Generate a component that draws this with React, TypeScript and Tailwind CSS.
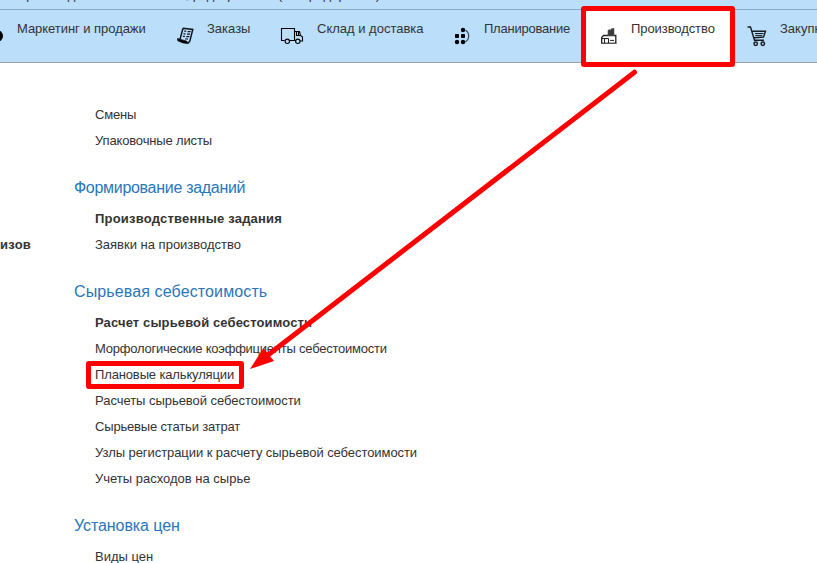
import type { ReactNode } from "react";

const Item = ({ children, bold, track = "" }: { children: string; bold?: boolean; track?: string }) => (
  <li className={`h-[26px] leading-[26px] ${bold ? "font-bold" : ""} ${track}`}>{children}</li>
);

const Group = ({ title, track, children }: { title: string; track: string; children: ReactNode }) => (
  <section>
    <h2 className={`-ml-[21px] mt-[21px] h-[31px] text-[16px] leading-[26px] text-[#2a76ba] ${track}`}>{title}</h2>
    <ul>{children}</ul>
  </section>
);

const OrdersIcon = () => (
  <svg className="ml-[7px] mt-[17px] h-[18px] w-[18px] shrink-0" viewBox="0 0 18 18" fill="none" stroke="#10151a">
    <path d="M6 1.2L15.8 2.4L12.8 14.2L11 16.2M6 1.2L3 12.4" strokeWidth="1.5" />
    <path d="M0.5 11.6L9.8 14.2L11.2 16.6L6 15.9L0.8 13.8Z" fill="#000" strokeWidth=".8" />
    <path d="M7.2 4.2h2M10.6 4.6h3M6.5 6.8h2M10 7.1h3M5.9 9.3h2M9.3 9.7h3M8 12h3" strokeWidth="1.2" />
  </svg>
);

const TruckIcon = () => (
  <svg className="mt-[17px] h-[18px] w-[24px] shrink-0" viewBox="0 0 24 18" fill="none" stroke="#000">
    <path d="M4.5 13.5H1.5V1.5h13v12H10M14.5 4.5h5l1 4 2 1.5v4h-2.5M16.5 5v3.5h4M18.5 5v3.5" strokeWidth="1.1" />
    <path d="M14.5 13.5H16" />
    <circle cx="7.3" cy="14.3" r="2.2" strokeWidth="1.1" />
    <circle cx="17.8" cy="14.3" r="2.2" strokeWidth="1.1" />
  </svg>
);

const PlanIcon = () => (
  <svg className="mt-[17px] h-[18px] w-[16px] shrink-0" viewBox="0 0 16 18">
    <g fill="#000">
      <circle cx="9" cy="3" r="2.2" />
      <rect x="1" y="7" width="4" height="4" rx=".7" />
      <rect x="7" y="7" width="4" height="4" rx=".7" />
      <circle cx="3" cy="15" r="2.2" />
      <circle cx="9" cy="15" r="2.2" />
    </g>
    <path d="M11.5 3.2C15.8 5.5 15.8 12.5 11.2 15" fill="none" stroke="#34495c" strokeWidth="1.2" />
  </svg>
);

const FactoryIcon = () => (
  <svg className="mt-[17px] h-[18px] w-[18px] shrink-0" viewBox="0 0 18 18" fill="none" stroke="#222">
    <path d="M1.7 16V10.5L3.5 8.5H15.8V16" strokeWidth="1.3" />
    <path d="M1 16.2h15.6" strokeWidth="1.1" />
    <path d="M8 8.5V3.2L10.2 2.4V3.4L11.5 2V1.5H14V8.5Z" fill="#3a3a3a" stroke="#555" strokeWidth=".6" />
    <path d="M4.5 16v-4.4h4V16M10 13.4h4M2 11.5h6.5" strokeWidth="1" />
  </svg>
);

const CartIcon = () => (
  <svg className="mt-[16px] h-[21px] w-[20px] shrink-0" viewBox="0 0 20 21" fill="none" stroke="#171c20">
    <path d="M0.5 1H3.5L7.5 14.2H17M5 5.2H18.5L16.5 11L7 11.8" strokeWidth="1.4" />
    <path d="M8 7.5h8.5M8.3 9.4h7" strokeWidth="1" />
    <circle cx="8.7" cy="17.7" r="1.7" strokeWidth="1.5" />
    <circle cx="15.8" cy="17.7" r="1.7" strokeWidth="1.5" />
  </svg>
);

const Label = ({ children, track = "" }: { children: string; track?: string }) => (
  <span className={`pt-2 leading-[22px] ${track}`}>{children}</span>
);

export default function App() {
  return (
    <div className="relative h-[563px] w-[817px] overflow-hidden bg-white font-['Liberation_Sans',Arial,sans-serif] text-[13px] whitespace-nowrap text-[#333]">
      <header className="h-[63px] border-b border-[#9a9fa4] bg-[#bbdefb]">
        <div className="flex h-[10px] overflow-hidden border-b border-[#84a9cb] leading-[16px]">
          <div className="-mt-[13px] flex h-4 pl-[17px]">
            <span className="w-[261px]">Производство и автоматика, редакр</span>
            <span className="tracking-[0.2px]">(тестредеренно)</span>
          </div>
        </div>
        <nav className="flex h-[52px]">
          <div className="flex w-[170px] shrink-0">
            <svg className="mt-[18px] h-4 w-[17px] shrink-0" viewBox="0 0 17 16">
              <circle cx="-3" cy="8" r="6" />
            </svg>
            <Label track="tracking-[-0.05px]">Маркетинг и продажи</Label>
          </div>
          <div className="flex w-[110px] shrink-0 gap-[12px]">
            <OrdersIcon />
            <Label>Заказы</Label>
          </div>
          <div className="flex w-[174px] shrink-0 gap-[13px]">
            <TruckIcon />
            <Label>Склад и доставка</Label>
          </div>
          <div className="flex w-[130px] shrink-0 gap-[14px]">
            <PlanIcon />
            <Label track="tracking-[-0.22px]">Планирование</Label>
          </div>
          <div className="flex w-[148px] shrink-0 gap-[13px] bg-white pl-4">
            <FactoryIcon />
            <Label track="tracking-[-0.08px]">Производство</Label>
          </div>
          <div className="flex shrink-0 gap-[13px] pl-[15px]">
            <CartIcon />
            <Label>Закупки</Label>
          </div>
        </nav>
      </header>
      <div className="flex">
        <aside className="w-[95px] pt-[169px] leading-[26px] font-bold tracking-[0.25px]">изов</aside>
        <main className="pt-[39px]">
          <ul>
            <Item track="tracking-[-0.2px]">Смены</Item>
            <Item track="tracking-[-0.15px]">Упаковочные листы</Item>
          </ul>
          <Group title="Формирование заданий" track="tracking-[-0.3px]">
            <Item bold track="tracking-[0.21px]">Производственные задания</Item>
            <Item>Заявки на производство</Item>
          </Group>
          <Group title="Сырьевая себестоимость" track="tracking-[0.12px]">
            <Item bold track="tracking-[0.12px]">Расчет сырьевой себестоимости</Item>
            <Item track="tracking-[-0.23px]">Морфологические коэффициенты себестоимости</Item>
            <Item track="tracking-[-0.14px]">Плановые калькуляции</Item>
            <Item track="tracking-[-0.04px]">Расчеты сырьевой себестоимости</Item>
            <Item track="tracking-[-0.17px]">Сырьевые статьи затрат</Item>
            <Item track="tracking-[-0.07px]">Узлы регистрации к расчету сырьевой себестоимости</Item>
            <Item>Учеты расходов на сырье</Item>
          </Group>
          <Group title="Установка цен" track="tracking-[-0.08px]">
            <Item>Виды цен</Item>
          </Group>
        </main>
      </div>
      <div className="absolute top-[6px] left-[581px] h-[61px] w-[154px] rounded-[3px] border-[5px] border-[#f00]" />
      <div className="absolute top-[361px] left-[86px] h-[28px] w-[158px] rounded-[3px] border-[5px] border-[#f00]" />
      <svg className="absolute inset-0 h-[563px] w-[817px]" viewBox="0 0 817 563">
        <path d="M634.5 72.2L266 356.5" stroke="#f00" strokeWidth="5" strokeLinecap="round" />
        <path d="M250 369L263.5 348L274 361Z" fill="#f00" />
      </svg>
    </div>
  );
}
